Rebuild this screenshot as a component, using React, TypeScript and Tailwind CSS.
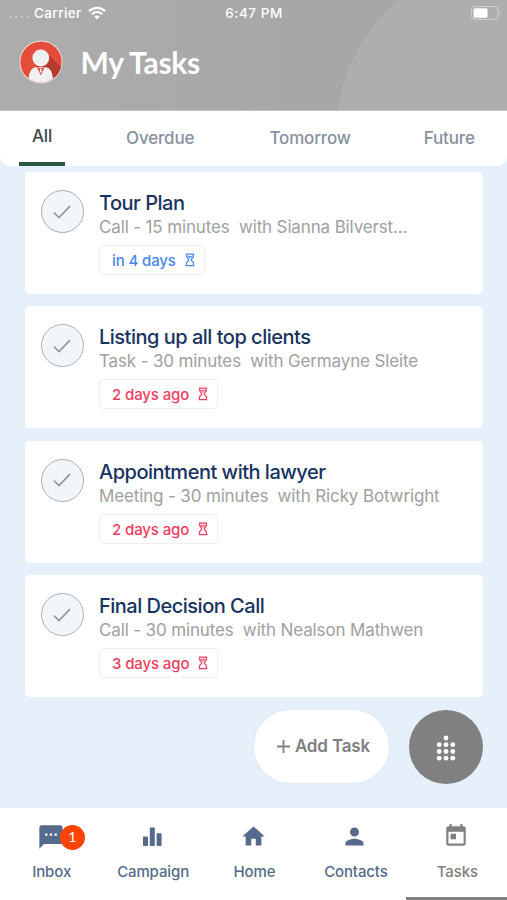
import { MdHome, MdPerson, MdSms, MdToday } from 'react-icons/md'

interface Task {
  id: number
  title: string
  kind: string
  contact: string
  due: string
  overdue: boolean
}

const tasks: Task[] = [
  { id: 1, title: 'Tour Plan', kind: 'Call - 15 minutes', contact: 'with Sianna Bilverst...', due: 'in 4 days', overdue: false },
  { id: 2, title: 'Listing up all top clients', kind: 'Task - 30 minutes', contact: 'with Germayne Sleite', due: '2 days ago', overdue: true },
  { id: 3, title: 'Appointment with lawyer', kind: 'Meeting - 30 minutes', contact: 'with Ricky Botwright', due: '2 days ago', overdue: true },
  { id: 4, title: 'Final Decision Call', kind: 'Call - 30 minutes', contact: 'with Nealson Mathwen', due: '3 days ago', overdue: true },
]

function Avatar() {
  return (
    <svg viewBox="0 0 44 44" className="w-11 h-11">
      <defs>
        <clipPath id="avatar">
          <circle cx="22" cy="22" r="20.6" />
        </clipPath>
      </defs>
      <circle cx="22" cy="22" r="21.5" fill="#ece4e2" />
      <g clipPath="url(#avatar)">
        <rect width="44" height="44" fill="#e64c3c" />
        <path d="M27 12L44 29V44H32L16 24Z" fill="#b53b2f" />
        <path d="M9.5 40C10 32 12 28.5 16.5 27.3H27C31.5 28.5 33.5 32 34 40V44H9.5Z" fill="#f1f1f1" />
        <path d="M17.8 27L21.8 35.5L25.8 27L23.2 28.2H20.4Z" fill="#e64c3c" />
        <path d="M21.2 28.6H22.4L22.8 31.5L21.8 33.3L20.8 31.5Z" fill="#f1f1f1" />
        <circle cx="21.8" cy="18" r="8.4" fill="#f1f1f1" />
      </g>
    </svg>
  )
}

function StatusBar() {
  return (
    <div className="h-[26px] grid grid-cols-3 items-center pl-[9px] text-[13.5px] font-medium">
      <div className="flex items-center">
        <svg viewBox="0 0 22 4" className="w-[22px] h-1 mt-2" fill="#d2d2d2">
          <circle cx="1.5" cy="2" r="1.1" />
          <circle cx="7.3" cy="2" r="1.1" />
          <circle cx="13" cy="2" r="1.1" />
          <circle cx="18.7" cy="2" r="1.1" />
        </svg>
        <span className="ml-[3px] tracking-[0.4px]">Carrier</span>
        <svg viewBox="0 0 18 14" className="w-[18px] h-3.5 ml-1.5" fill="none" stroke="white" strokeWidth="2.3">
          <path d="M1 5.2C5.5 .7 12.5 .7 17 5.2" />
          <path d="M4 8.2C6.9 5.5 11.1 5.5 14 8.2" />
          <path d="M9 13.5L6.2 10.7C7.8 9.2 10.2 9.2 11.8 10.7Z" fill="white" stroke="none" />
        </svg>
      </div>
      <span className="text-center whitespace-nowrap tracking-[0.55px] -ml-2">6:47 PM</span>
      <svg viewBox="0 0 32 14" className="w-8 h-3.5 justify-self-end mr-[5px]">
        <rect x="1.5" y=".5" width="26.5" height="13" rx="3.5" fill="none" stroke="#d0d0d0" />
        <rect x="3.5" y="2.3" width="14" height="9.4" rx="1.5" fill="white" />
        <path d="M29.5 5V9C31 8.3 31 5.7 29.5 5Z" fill="#d0d0d0" />
      </svg>
    </div>
  )
}

function Hourglass() {
  return (
    <svg viewBox="0 0 10 14" className="w-2.5 h-3.5" fill="none" stroke="currentColor" strokeWidth="1.3">
      <path d="M.8 1.2H9.2M.8 12.6H9.2" />
      <path d="M1.7 1.2V3.2C1.7 5 3.7 5.6 3.7 6.9S1.5 8.6 1.5 10.4V12.6M8.3 1.2V3.2C8.3 5 6.3 5.6 6.3 6.9S8.5 8.6 8.5 10.4V12.6" />
      <path d="M3 3.4H7L5 5.4Z" strokeWidth=".9" />
    </svg>
  )
}

function TaskCard({ task }: { task: Task }) {
  return (
    <div className="h-[122px] shrink-0 bg-white rounded-[5px] flex pl-[15.5px] pt-[18px]">
      <div className="w-[43px] h-[43px] rounded-full border-[1.5px] border-[#a9afb3] bg-[#f2f6f8] flex items-center justify-center shrink-0">
        <svg viewBox="0 0 18 14" className="w-[18px] h-3.5" fill="none" stroke="#8e979d" strokeWidth="1.7">
          <path d="M.8 7.5L6 12.6L17 1.2" />
        </svg>
      </div>
      <div className="ml-[15.5px] whitespace-nowrap">
        <h2 className="text-[20px] leading-[26px] font-medium tracking-[-0.5px] text-[#17335f]">{task.title}</h2>
        <p className="text-[17px] leading-[22px] tracking-[-0.14px] text-[#a0a0a0] whitespace-pre">{`${task.kind}  ${task.contact}`}</p>
        <div
          className={`mt-[7px] h-[30px] w-fit pl-3 pr-[9px] border border-[#edf0f3] rounded-[4px] flex items-center gap-[9px] text-[15px] font-medium tracking-[-0.12px] ${
            task.overdue ? 'text-[#ee3d60]' : 'text-[#4a86ee]'
          }`}
        >
          <span className="mt-0.5">{task.due}</span>
          <Hourglass />
        </div>
      </div>
    </div>
  )
}

function CampaignIcon() {
  return (
    <svg viewBox="0 0 26 26" className="w-[26px] h-[26px]" fill="currentColor">
      <rect x="4" y="13.5" width="5" height="9.5" rx=".8" />
      <rect x="10.8" y="4.5" width="5" height="18.5" rx=".8" />
      <rect x="17.6" y="10.3" width="5" height="12.7" rx=".8" />
    </svg>
  )
}

const navItems = [
  { label: 'Inbox', icon: <MdSms size={28} />, badge: 1 },
  { label: 'Campaign', icon: <CampaignIcon /> },
  { label: 'Home', icon: <MdHome size={27} /> },
  { label: 'Contacts', icon: <MdPerson size={27} /> },
  { label: 'Tasks', icon: <MdToday size={26} />, active: true },
]

export default function App() {
  return (
    <div className="w-[507px] h-[900px] overflow-hidden flex flex-col bg-[#e6f0fa] font-['Inter',sans-serif]">
      <header className="relative h-[111px] shrink-0 bg-linear-to-r from-[#adadad] to-[#a7a7a7] to-60% border-b border-[#c4c4c4] text-white overflow-hidden">
        <div className="absolute left-[337px] -top-[37px] w-[334px] h-[334px] rounded-full bg-[#aeaeae]" />
        <div className="relative">
          <StatusBar />
          <div className="flex items-center pl-[18.5px] mt-[14px]">
            <Avatar />
            <h1 className="ml-[18px] font-['Lato',sans-serif] font-bold text-[30px] leading-none tracking-[-0.3px]">My Tasks</h1>
          </div>
        </div>
      </header>

      <nav className="h-[55px] shrink-0 bg-white rounded-b-[10px] flex pl-[19px] text-[17px] tracking-[-0.15px] text-[#87919e] font-medium">
        <div className="w-[46px] border-b-4 border-[#2a5a40] text-[#3d444d] text-center pt-[13px]">All</div>
        <div className="ml-[61px] pt-[15px]">Overdue</div>
        <div className="ml-[75px] pt-[15px]">Tomorrow</div>
        <div className="ml-[73px] pt-[15px]">Future</div>
      </nav>

      <main className="flex-1 flex flex-col pl-[25px] pr-6 pt-1.5">
        <div className="flex flex-col gap-[12.4px]">
          {tasks.map((task) => (
            <TaskCard key={task.id} task={task} />
          ))}
        </div>
        <div className="flex justify-end gap-5 mt-[13px]">
          <button className="w-[135px] h-[73px] rounded-full bg-white shadow-[0_0_3px_rgba(0,0,0,0.06)] flex items-center justify-center gap-[5px] pl-1 text-[17px] font-semibold tracking-[-0.15px] text-[#808080] whitespace-nowrap">
            <svg viewBox="0 0 13 13" className="w-[13px] h-[13px]" stroke="currentColor" strokeWidth="1.8">
              <path d="M6.5 0V13M0 6.5H13" />
            </svg>
            Add Task
          </button>
          <button className="w-[74px] h-[74px] rounded-full bg-[#808080] flex items-center justify-center">
            <svg viewBox="0 0 20 26" className="w-5 h-[26px] mt-0.5" fill="white">
              <circle cx="10" cy="3" r="2.4" />
              {[9.7, 16.5, 23.2].map((y) =>
                [3.2, 10, 16.8].map((x) => <circle key={`${x}-${y}`} cx={x} cy={y} r="2.4" />),
              )}
            </svg>
          </button>
        </div>
      </main>

      <footer className="h-[92px] shrink-0 bg-white grid grid-cols-5 text-[#566b8b]">
        {navItems.map((item) => (
          <div
            key={item.label}
            className={`flex flex-col items-center pt-[15px] ${
              item.active ? 'text-[#808080] border-b-[3px] border-[#808080]' : ''
            }`}
          >
            <div className="relative h-[27px]">
              {item.icon}
              {item.badge && (
                <span className="absolute left-[23px] top-[2px] w-[25px] h-[25px] rounded-full bg-[#fd4403] text-white font-['Lato',sans-serif] text-[14px] leading-[24px] text-center">
                  {item.badge}
                </span>
              )}
            </div>
            <span className="mt-[11px] text-[15px] leading-[22px] font-medium tracking-[-0.12px] pl-0.5">{item.label}</span>
          </div>
        ))}
      </footer>
    </div>
  )
}
